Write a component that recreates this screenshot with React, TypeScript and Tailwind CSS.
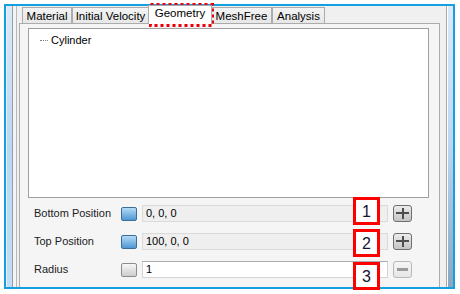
import React from 'react';

const tabs = [
  { label: 'Material', w: 'w-[50px]' },
  { label: 'Initial Velocity', w: 'w-[77px]' },
  { label: 'Geometry', w: 'w-[64px]', active: true },
  { label: 'MeshFree', w: 'w-[61px]' },
  { label: 'Analysis', w: 'w-[53px]' },
];

const rows = [
  { label: 'Bottom Position', value: '0, 0, 0', color: true, enabled: false, btn: 'plus' },
  { label: 'Top Position', value: '100, 0, 0', color: true, enabled: false, btn: 'plus' },
  { label: 'Radius', value: '1', color: false, enabled: true, btn: 'minus' },
];

const PlusButton: React.FC = () => (
  <div className="relative w-[19px] h-[17px] rounded-[3px] border border-[#6f6f6f] bg-gradient-to-b from-[#ececec] to-[#c4c4c4]">
    <div className="absolute left-[2px] right-[2px] top-[6px] h-[2px] bg-[#4d4d4d]" />
    <div className="absolute top-[2px] bottom-[2px] left-[7.5px] w-[2px] bg-[#4d4d4d]" />
  </div>
);

const MinusButton: React.FC = () => (
  <div className="relative w-[19px] h-[17px] rounded-[3px] border border-[#b9b9b9] bg-gradient-to-b from-[#f6f6f6] to-[#e6e6e6]">
    <div className="absolute left-[3px] right-[3px] top-[6px] h-[3px] bg-[#9a9a9a]" />
  </div>
);

export default function App() {
  return (
    <div className="relative w-[460px] h-[294px] overflow-hidden bg-white font-['Liberation_Sans',Arial,sans-serif] text-[11px] text-black">
      {/* window */}
      <div className="ml-[4px] mt-[4px] flex w-[451px] h-[285px] border-2 border-[#14a0e0] bg-[#f0f0f0]">
        {/* left frame */}
        <div className="flex h-full">
          <div className="w-px bg-[#e9f1fa]" />
          <div className="w-[5px] bg-gradient-to-b from-[#dde9f6] via-[#bcd6f2] to-[#c4dcf5]" />
          <div className="w-px bg-[#8f9eae]" />
          <div className="w-[3px] bg-[#f4f4f4]" />
          <div className="w-px bg-[#b9b9b9]" />
        </div>

        {/* main */}
        <div className="flex-1 flex flex-col">
          {/* tab strip */}
          <div className="flex items-end h-[18px] pl-[5px]">
            {tabs.map((t) =>
              t.active ? (
                <div
                  key={t.label}
                  className={`${t.w} h-[19px] -mx-px relative z-10 flex items-center justify-center border border-b-0 border-[#acacac] bg-white pb-[2px] text-[11.5px]`}
                >
                  {t.label}
                </div>
              ) : (
                <div
                  key={t.label}
                  className={`${t.w} h-[17px] flex items-center justify-center border border-b-0 border-[#acacac] bg-gradient-to-b from-[#f3f3f3] to-[#e6e6e6] pt-[1px] text-[11.5px]`}
                >
                  {t.label}
                </div>
              )
            )}
          </div>

          {/* tab page */}
          <div className="ml-[2px] mr-[6px] flex-1 border border-b-0 border-[#acacac] bg-[#f5f5f5] -mt-px">
            <div className="ml-[8px] mt-[4px] w-[401px] h-[170px] border border-[#a0a0a0] bg-white">
              <div className="flex items-center h-[20px] mt-[1px] pl-[11px]">
                <div className="w-[8px] border-t border-dotted border-[#808080]" />
                <span className="ml-[3px]">Cylinder</span>
              </div>
            </div>

            <div className="mt-[7px] flex flex-col gap-[11px] pl-[14px]">
              {rows.map((r) => (
                <div key={r.label} className="flex items-center h-[17px]">
                  <div className="w-[87px] text-[#1b1b1b]">{r.label}</div>
                  <div
                    className={
                      r.color
                        ? 'w-[16px] h-[14px] rounded-[2px] border border-[#3b6d96] bg-gradient-to-b from-[#b4dbf5] to-[#4d97d3]'
                        : 'w-[16px] h-[14px] rounded-[2px] border border-[#8c8c8c] bg-gradient-to-b from-[#f7f7f7] to-[#cdcdcd]'
                    }
                  />
                  <div
                    className={
                      r.enabled
                        ? 'ml-[5px] w-[246px] h-[17px] flex items-center pl-[3px] border border-[#d4d4d4] border-t-[#ababab] bg-white'
                        : 'ml-[5px] w-[246px] h-[17px] flex items-center pl-[3px] border border-[#dadada] bg-[#efefef]'
                    }
                  >
                    {r.value}
                  </div>
                  <div className="ml-[5px]">{r.btn === 'plus' ? <PlusButton /> : <MinusButton />}</div>
                </div>
              ))}
            </div>
          </div>
        </div>

        {/* right frame */}
        <div className="flex h-full">
          <div className="w-px bg-[#a8a8a8]" />
          <div className="w-px bg-[#ffffff]" />
          <div className="w-[5px] bg-gradient-to-b from-[#dde9f6] via-[#bcd6f2] to-[#8aa6c2]" />
        </div>
      </div>

      {/* annotations */}
      <svg className="absolute left-[149px] top-[3px]" width="65" height="24">
        <rect
          x="1.5"
          y="1.5"
          width="62"
          height="21"
          fill="none"
          stroke="#e8000b"
          strokeWidth="3"
          strokeDasharray="3 3"
        />
      </svg>
      {['1', '2', '3'].map((n, i) => (
        <div
          key={n}
          className={`absolute left-[353px] w-[27px] h-[28px] border-[3px] border-[#ff0000] bg-white flex items-center justify-center pt-[2px] text-[16px] text-[#141432] ${
            i === 0 ? 'top-[197px]' : i === 1 ? 'top-[229px]' : 'top-[262px]'
          }`}
        >
          {n}
        </div>
      ))}
    </div>
  );
}
